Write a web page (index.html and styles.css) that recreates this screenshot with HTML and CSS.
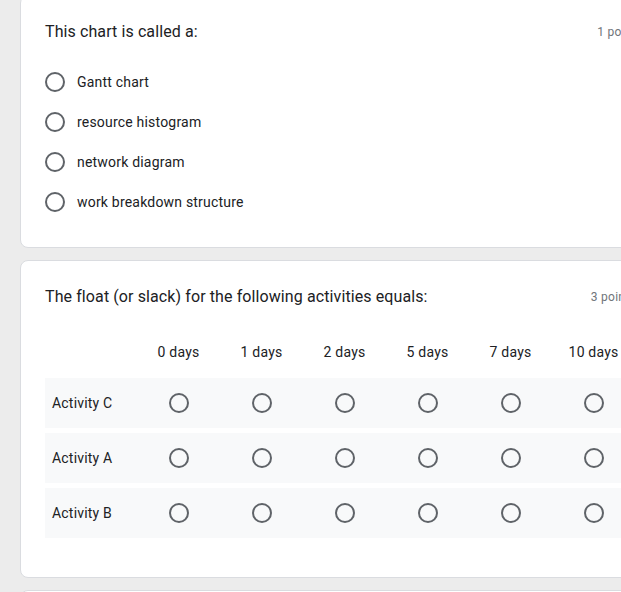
FILE: index.html
```html
<!DOCTYPE html>
<html>
<head>
<meta charset="utf-8">
<link rel="stylesheet" href="styles.css">
</head>
<body>
<div class="page">
  <div class="card first">
    <div class="qhead">
      <div class="qtitle">This chart is called a:</div>
      <div class="points">1 point</div>
    </div>
    <div class="options">
      <div class="option"><span class="radio"></span><span class="otext">Gantt chart</span></div>
      <div class="option"><span class="radio"></span><span class="otext">resource histogram</span></div>
      <div class="option"><span class="radio"></span><span class="otext">network diagram</span></div>
      <div class="option"><span class="radio"></span><span class="otext">work breakdown structure</span></div>
    </div>
  </div>

  <div class="card">
    <div class="qhead">
      <div class="qtitle">The float (or slack) for the following activities equals:</div>
      <div class="points">3 points</div>
    </div>
    <div class="grid">
      <div class="ghead">
        <div class="glabel"></div>
        <div class="gcol">0 days</div>
        <div class="gcol">1 days</div>
        <div class="gcol">2 days</div>
        <div class="gcol">5 days</div>
        <div class="gcol">7 days</div>
        <div class="gcol">10 days</div>
      </div>
      <div class="grow">
        <div class="glabel">Activity C</div>
        <div class="gcell"><span class="radio"></span></div>
        <div class="gcell"><span class="radio"></span></div>
        <div class="gcell"><span class="radio"></span></div>
        <div class="gcell"><span class="radio"></span></div>
        <div class="gcell"><span class="radio"></span></div>
        <div class="gcell"><span class="radio"></span></div>
      </div>
      <div class="grow">
        <div class="glabel">Activity A</div>
        <div class="gcell"><span class="radio"></span></div>
        <div class="gcell"><span class="radio"></span></div>
        <div class="gcell"><span class="radio"></span></div>
        <div class="gcell"><span class="radio"></span></div>
        <div class="gcell"><span class="radio"></span></div>
        <div class="gcell"><span class="radio"></span></div>
      </div>
      <div class="grow">
        <div class="glabel">Activity B</div>
        <div class="gcell"><span class="radio"></span></div>
        <div class="gcell"><span class="radio"></span></div>
        <div class="gcell"><span class="radio"></span></div>
        <div class="gcell"><span class="radio"></span></div>
        <div class="gcell"><span class="radio"></span></div>
        <div class="gcell"><span class="radio"></span></div>
      </div>
    </div>
  </div>

  <div class="card last"></div>
</div>
</body>
</html>
```

FILE: styles.css
```css
html, body {
  margin: 0;
  padding: 0;
  background: #ececec;
  overflow: hidden;
  height: 592px;
}
body {
  font-family: Roboto, "Liberation Sans", Arial, sans-serif;
  color: #202124;
}
.page {
  padding-left: 20px;
  margin-top: -5px;
  width: 641px;
}
.card {
  box-sizing: border-box;
  width: 641px;
  background: #fff;
  border: 1px solid #dadce0;
  border-radius: 8px;
  padding: 24px 24px 39px 24px;
  margin-bottom: 12px;
}
.card.first {
  padding-bottom: 25px;
}
.card.last {
  height: 60px;
}
.qhead {
  display: flex;
  justify-content: space-between;
  align-items: center;
  height: 24px;
}
.qtitle {
  font-size: 16px;
  line-height: 24px;
  letter-spacing: 0.1px;
}
.points {
  font-size: 12px;
  color: #70757a;
  letter-spacing: 0.3px;
}
.options {
  margin-top: 18px;
}
.option {
  display: flex;
  align-items: center;
  height: 40px;
}
.radio {
  box-sizing: border-box;
  display: inline-block;
  width: 20px;
  height: 20px;
  border: 2px solid #5f6368;
  border-radius: 50%;
  flex: none;
}
.otext {
  margin-left: 12px;
  font-size: 14px;
  letter-spacing: 0.2px;
}
.grid {
  margin-top: 28px;
  display: flex;
  flex-direction: column;
  gap: 5px;
}
.ghead, .grow {
  display: grid;
  grid-template-columns: 92px repeat(6, 83px);
  align-items: center;
}
.ghead {
  height: 30px;
  margin-bottom: 6px;
}
.gcol {
  text-align: center;
  font-size: 14px;
  letter-spacing: 0.2px;
}
.grow {
  height: 50px;
  background: #f8f9fa;
}
.grow .glabel {
  padding-left: 7px;
  font-size: 14px;
  letter-spacing: 0.2px;
}
.gcell {
  display: flex;
  justify-content: center;
  align-items: center;
}
```
